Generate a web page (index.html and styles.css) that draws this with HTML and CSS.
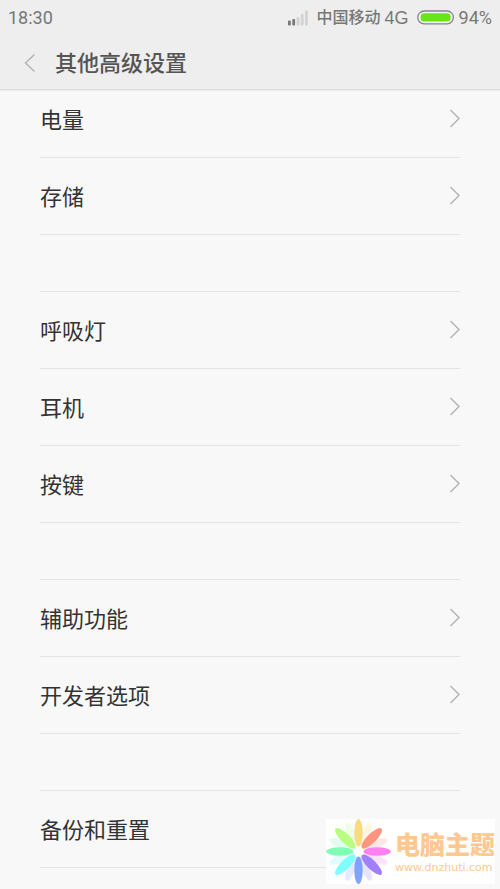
FILE: index.html
```html
<!DOCTYPE html>
<html lang="zh-CN">
<head>
<meta charset="utf-8">
<meta name="viewport" content="width=device-width, initial-scale=1">
<title>其他高级设置</title>
<link rel="stylesheet" href="styles.css">
</head>
<body>
<header class="header">
  <div class="status">
    <time class="clock">18:30</time>
    <svg class="signal" width="20" height="16" viewBox="0 0 20 16" aria-hidden="true">
      <g fill="#777"><rect x="0" y="10.5" width="2.8" height="5" rx="1"/><rect x="4.3" y="9" width="2.8" height="6.5" rx="1"/></g>
      <g fill="#d3d3d3"><rect x="8.6" y="7" width="2.8" height="8.5" rx="1"/><rect x="12.8" y="3.8" width="2.8" height="11.7" rx="1"/><rect x="17" y="0.5" width="2.8" height="15" rx="1"/></g>
    </svg>
    <span class="carrier">中国移动</span>
    <span class="network">4G</span>
    <svg class="battery" width="38" height="16" viewBox="0 0 38 16" aria-hidden="true">
      <rect x="0.8" y="1" width="35.6" height="12.8" rx="6.4" fill="#f4f4f4" stroke="#858585" stroke-width="1.3"/>
      <rect x="3.6" y="3.2" width="30" height="8.4" rx="3.6" fill="#69e414"/>
    </svg>
    <span class="percent">94%</span>
  </div>
  <div class="titlebar">
    <button class="back" type="button" aria-label="返回">
      <svg width="12" height="20" viewBox="0 0 12 20"><path d="M10.5 1.5 1.5 10l9 8.5"/></svg>
    </button>
    <h1 class="title">其他高级设置</h1>
  </div>
</header>
<main class="settings">
  <nav class="group">
    <a class="row" href="#battery"><span class="label">电量</span><svg class="chevron" width="12" height="20" viewBox="0 0 12 20"><path d="M2.5 1 11 9.5 2.5 18"/></svg></a>
    <a class="row" href="#storage"><span class="label">存储</span><svg class="chevron" width="12" height="20" viewBox="0 0 12 20"><path d="M2.5 1 11 9.5 2.5 18"/></svg></a>
  </nav>
  <nav class="group">
    <a class="row" href="#light"><span class="label">呼吸灯</span><svg class="chevron" width="12" height="20" viewBox="0 0 12 20"><path d="M2.5 1 11 9.5 2.5 18"/></svg></a>
    <a class="row" href="#headset"><span class="label">耳机</span><svg class="chevron" width="12" height="20" viewBox="0 0 12 20"><path d="M2.5 1 11 9.5 2.5 18"/></svg></a>
    <a class="row" href="#keys"><span class="label">按键</span><svg class="chevron" width="12" height="20" viewBox="0 0 12 20"><path d="M2.5 1 11 9.5 2.5 18"/></svg></a>
  </nav>
  <nav class="group">
    <a class="row" href="#accessibility"><span class="label">辅助功能</span><svg class="chevron" width="12" height="20" viewBox="0 0 12 20"><path d="M2.5 1 11 9.5 2.5 18"/></svg></a>
    <a class="row" href="#developer"><span class="label">开发者选项</span><svg class="chevron" width="12" height="20" viewBox="0 0 12 20"><path d="M2.5 1 11 9.5 2.5 18"/></svg></a>
  </nav>
  <nav class="group">
    <a class="row" href="#backup"><span class="label">备份和重置</span><svg class="chevron" width="12" height="20" viewBox="0 0 12 20"><path d="M2.5 1 11 9.5 2.5 18"/></svg></a>
  </nav>
</main>
<aside class="watermark">
  <svg class="flower" width="65" height="65" viewBox="-32.5 -32.5 65 65" aria-hidden="true">
    <g class="pale">
      <ellipse cy="-18.5" rx="4" ry="13" fill="#fff6e0" transform="rotate(22.5)"/>
      <ellipse cy="-18.5" rx="4" ry="13" fill="#ffe8e4" transform="rotate(67.5)"/>
      <ellipse cy="-18.5" rx="4" ry="13" fill="#fde2fb" transform="rotate(112.5)"/>
      <ellipse cy="-18.5" rx="4" ry="13" fill="#e8e2fd" transform="rotate(157.5)"/>
      <ellipse cy="-18.5" rx="4" ry="13" fill="#e3e9ff" transform="rotate(202.5)"/>
      <ellipse cy="-18.5" rx="4" ry="13" fill="#e0fcfd" transform="rotate(247.5)"/>
      <ellipse cy="-18.5" rx="4" ry="13" fill="#e2fdee" transform="rotate(292.5)"/>
      <ellipse cy="-18.5" rx="4" ry="13" fill="#effde2" transform="rotate(337.5)"/>
    </g>
    <ellipse cy="-18.7" rx="4.2" ry="13.7" fill="#f8da80"/>
    <ellipse cy="-18.7" rx="4.6" ry="13.7" fill="#ff9580" transform="rotate(45)"/>
    <ellipse cy="-18.7" rx="4.2" ry="13.7" fill="#ff80f0" transform="rotate(90)"/>
    <ellipse cy="-18.7" rx="4.6" ry="13.7" fill="#a080ff" transform="rotate(135)"/>
    <ellipse cy="-18.7" rx="4.2" ry="13.7" fill="#80a3ff" transform="rotate(180)"/>
    <ellipse cy="-18.7" rx="4.6" ry="13.7" fill="#80ffff" transform="rotate(225)"/>
    <ellipse cy="-18.7" rx="4.2" ry="13.7" fill="#80ffb4" transform="rotate(270)"/>
    <ellipse cy="-18.7" rx="4.6" ry="13.7" fill="#b8ff80" transform="rotate(315)"/>
  </svg>
  <div class="brand">
    <span class="brand-name">电脑主题</span>
    <span class="brand-url">www.dnzhuti.com</span>
  </div>
</aside>
</body>
</html>
```
FILE: styles.css
```css
* {
  box-sizing: border-box;
}

body {
  margin: 0;
  height: 100vh;
  overflow: hidden;
  background: #f8f8f8;
  color: #333;
  font-family: Roboto, "Noto Sans CJK SC", sans-serif;
}

svg path {
  fill: none;
  stroke: #b4b4b4;
  stroke-width: 1.5;
}

.header {
  position: relative;
  z-index: 1;
  background: #eee;
  border-bottom: 1px solid #dcdcdc;
  box-shadow: 0 1px 0 #ececec;
}

.status {
  display: flex;
  align-items: center;
  height: 36px;
  padding: 0 8px;
  color: #777;
  font-size: 18px;
  line-height: 20px;
}

.clock {
  margin-right: auto;
}

.carrier {
  margin-left: 9px;
  font-size: 16px;
  font-weight: 500;
}

.network {
  margin-left: 4px;
  font-family: "Liberation Sans", sans-serif;
}

.battery {
  margin: 0 4px 0 8px;
}

.titlebar {
  display: flex;
  align-items: center;
  height: 53px;
}

.back {
  display: flex;
  margin: 0;
  padding: 0 19px 0 24px;
  border: 0;
  background: none;
}

.title {
  margin: 0;
  padding-top: 2px;
  color: #555;
  font-size: 22px;
  font-weight: 500;
  line-height: 32px;
}

/* The list is scrolled slightly under the header. */
.settings {
  margin-top: -9px;
  padding: 0 40px;
}

.group + .group {
  margin-top: 56px;
  border-top: 1px solid #e4e4e4;
}

.row {
  display: flex;
  align-items: center;
  justify-content: space-between;
  height: 77px;
  border-bottom: 1px solid #e4e4e4;
  color: #333;
  font-size: 22px;
  line-height: 32px;
  text-decoration: none;
}

.label {
  padding-top: 4px;
}

.watermark {
  position: fixed;
  right: 5px;
  bottom: 5px;
  z-index: 2;
  display: flex;
  align-items: center;
  background: #fff;
}

.brand {
  display: flex;
  flex-direction: column;
  padding-top: 4px;
  margin-left: 4px;
  color: #ffc890;
  white-space: nowrap;
}

.brand-name {
  font-size: 25px;
  font-weight: 900;
  line-height: 28px;
}

.brand-url {
  font-family: "DejaVu Sans", sans-serif;
  font-size: 11px;
  line-height: 16px;
}
```
